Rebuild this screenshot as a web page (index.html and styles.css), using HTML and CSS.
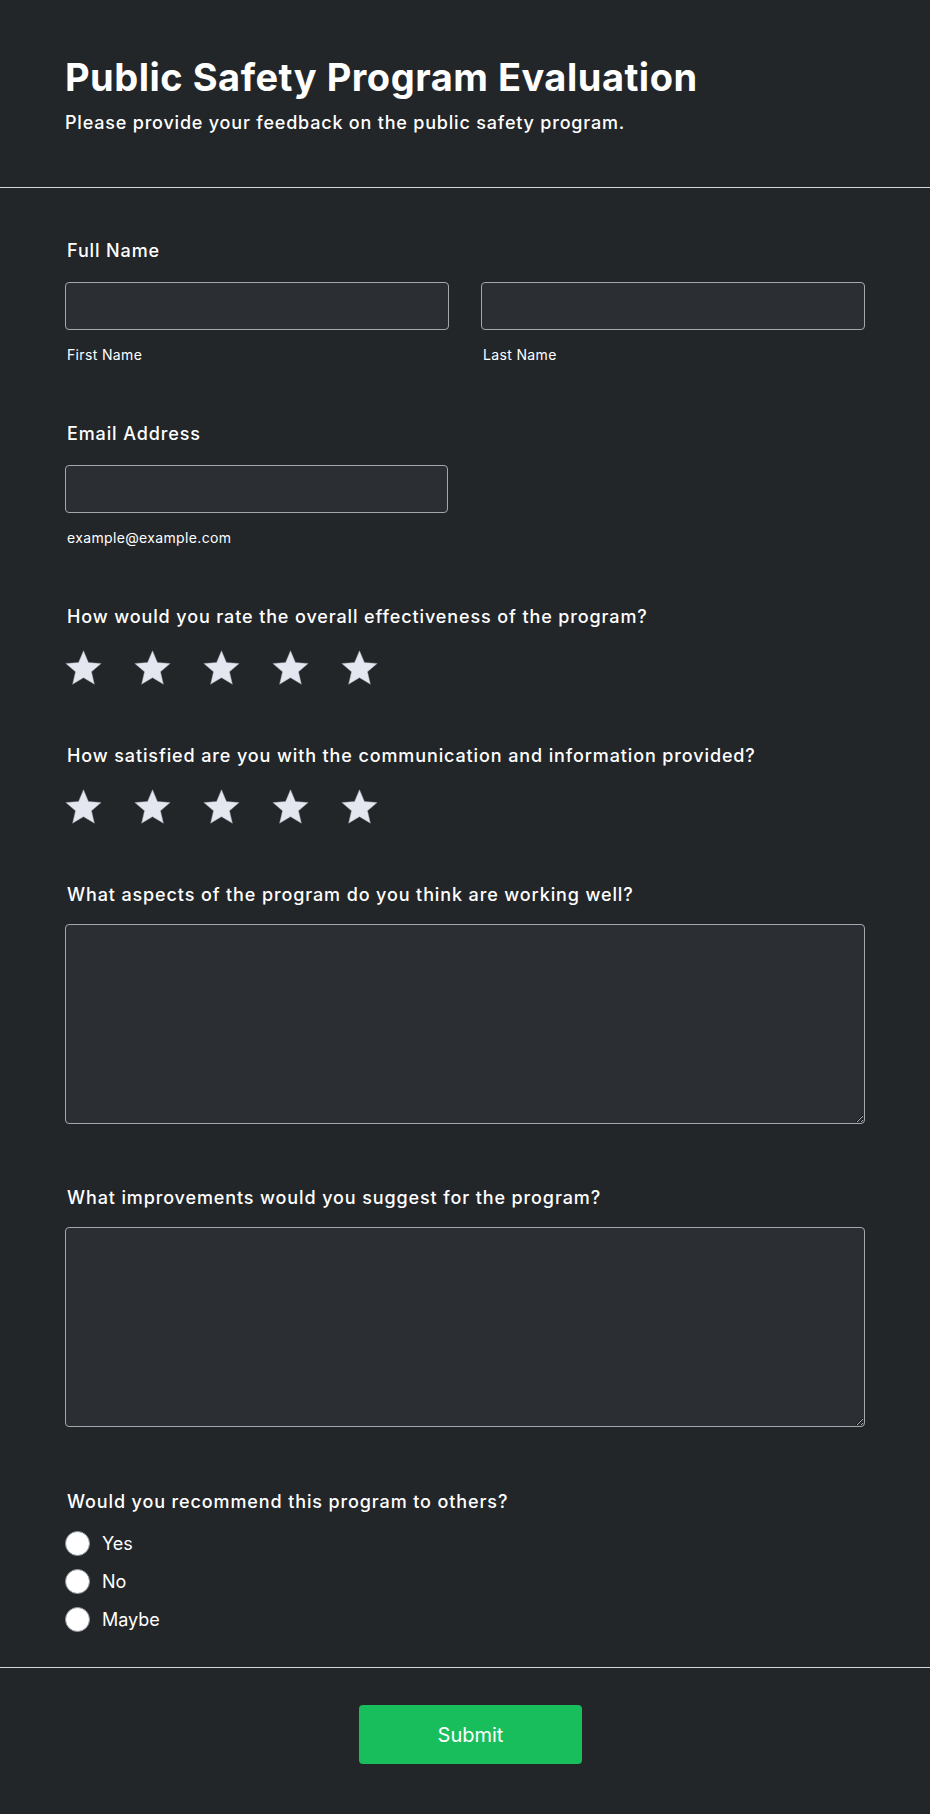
FILE: index.html
```html
<!DOCTYPE html>
<html lang="en">
<head>
  <meta charset="UTF-8">
  <title>Public Safety Program Evaluation</title>
  <link rel="stylesheet" href="styles.css">
</head>
<body>
  <div class="page">
    <header class="form-header">
      <div class="container">
        <h1>Public Safety Program Evaluation</h1>
        <p class="subtitle">Please provide your feedback on the public safety program.</p>
      </div>
    </header>

    <form class="form-body">
      <div class="container">
        <div class="field">
          <label class="field-label">Full Name</label>
          <div class="name-row">
            <div>
              <input type="text" id="first-name" name="first_name">
              <div class="sublabel">First Name</div>
            </div>
            <div>
              <input type="text" id="last-name" name="last_name">
              <div class="sublabel">Last Name</div>
            </div>
          </div>
        </div>

        <div class="field">
          <label class="field-label" for="email">Email Address</label>
          <div class="half">
            <input type="email" id="email" name="email">
            <div class="sublabel">example@example.com</div>
          </div>
        </div>

        <div class="field">
          <label class="field-label">How would you rate the overall effectiveness of the program?</label>
          <div class="stars" data-name="effectiveness"></div>
        </div>

        <div class="field">
          <label class="field-label">How satisfied are you with the communication and information provided?</label>
          <div class="stars" data-name="communication"></div>
        </div>

        <div class="field field-text">
          <label class="field-label" for="working-well">What aspects of the program do you think are working well?</label>
          <textarea id="working-well" name="working_well"></textarea>
        </div>

        <div class="field field-text">
          <label class="field-label" for="improvements">What improvements would you suggest for the program?</label>
          <textarea id="improvements" name="improvements"></textarea>
        </div>

        <div class="field field-radio">
          <label class="field-label">Would you recommend this program to others?</label>
          <div class="radio-list">
            <label class="radio"><input type="radio" name="recommend" value="yes"><span>Yes</span></label>
            <label class="radio"><input type="radio" name="recommend" value="no"><span>No</span></label>
            <label class="radio"><input type="radio" name="recommend" value="maybe"><span>Maybe</span></label>
          </div>
        </div>
      </div>
    </form>

    <footer class="form-footer">
      <button type="submit">Submit</button>
    </footer>
  </div>

  <script>
    // 每组五颗星
    var starPath = "M12 17.27L18.18 21l-1.64-7.03L22 9.24l-7.19-.61L12 2 9.19 8.63 2 9.24l5.46 4.73L5.82 21z";
    var groups = document.querySelectorAll('.stars');
    for (var g = 0; g < groups.length; g++) {
      var html = "";
      for (var i = 1; i <= 5; i++) {
        html += '<button type="button" class="star" aria-label="' + i + ' star">' +
          '<svg viewBox="1.6 1.6 20.8 19.8" width="37" height="35"><path d="' + starPath + '"/></svg></button>';
      }
      groups[g].innerHTML = html;
    }
  </script>
</body>
</html>
```

FILE: styles.css
```css
* {
  box-sizing: border-box;
}
body {
  margin: 0;
  background-color: #232629;
  color: #ffffff;
  font-family: Inter, "Noto Sans", "Liberation Sans", sans-serif;
}
.container {
  width: 800px;
  margin: 0 auto;
}
.form-header {
  padding: 54px 0 50px;
  border-bottom: 1px solid #d4d6da;
}
h1 {
  margin: 0;
  font-size: 38px;
  line-height: 46px;
  font-weight: 700;
  letter-spacing: 0.5px;
}
.subtitle {
  margin: 9px 0 0;
  font-size: 18px;
  line-height: 28px;
  font-weight: 500;
  letter-spacing: 0.8px;
}
.form-body {
  padding: 49px 0 36px;
  border-bottom: 1px solid #d4d6da;
}
.field {
  margin-bottom: 55px;
}
.field-text {
  margin-bottom: 60px;
}
.field:last-child {
  margin-bottom: 0;
}
.field-radio {
  margin-top: 61px;
}
.field-label {
  display: block;
  padding-left: 2px;
  margin-bottom: 17px;
  font-size: 18px;
  line-height: 28px;
  font-weight: 500;
  letter-spacing: 0.88px;
}
.field-text .field-label,
.field-radio .field-label {
  margin-bottom: 15px;
}
.name-row {
  display: grid;
  grid-template-columns: 1fr 1fr;
  gap: 32px;
}
.half {
  width: 383px;
}
input[type="text"],
input[type="email"],
textarea {
  display: block;
  width: 100%;
  background-color: #2b2e33;
  border: 1px solid #a3a7ae;
  border-radius: 4px;
  color: #fff;
  font-family: inherit;
  font-size: 16px;
  padding: 10px 12px;
}
input[type="text"],
input[type="email"] {
  height: 48px;
}
textarea {
  height: 200px;
  resize: vertical;
  color-scheme: dark;
}
.sublabel {
  margin-top: 15px;
  padding-left: 2px;
  font-size: 14px;
  line-height: 20px;
  letter-spacing: 0.35px;
}
.stars {
  display: flex;
  align-items: center;
  gap: 32px;
  height: 39px;
}
.star {
  padding: 0;
  border: none;
  background: none;
  cursor: pointer;
  display: block;
  line-height: 0;
}
.star svg path {
  fill: #e4e6f0;
  stroke: #9a9ca8;
  stroke-width: 0.25;
  stroke-linejoin: round;
}
.radio-list {
  display: flex;
  flex-direction: column;
  gap: 14px;
}
.radio {
  display: flex;
  align-items: center;
  gap: 12px;
  height: 24px;
  font-size: 18px;
}
.radio input {
  appearance: none;
  margin: 0;
  width: 25px;
  height: 25px;
  border-radius: 50%;
  background: #ffffff;
  border: 1px solid #8e929a;
}
.form-footer {
  display: flex;
  justify-content: center;
  padding: 37px 0 50px 11px;
}
button[type="submit"] {
  width: 223px;
  height: 59px;
  background-color: #18bd5c;
  color: #fff;
  border: none;
  border-radius: 4px;
  font-family: inherit;
  font-size: 20px;
  cursor: pointer;
}
button[type="submit"]:hover {
  background-color: #14a24f;
}
```
